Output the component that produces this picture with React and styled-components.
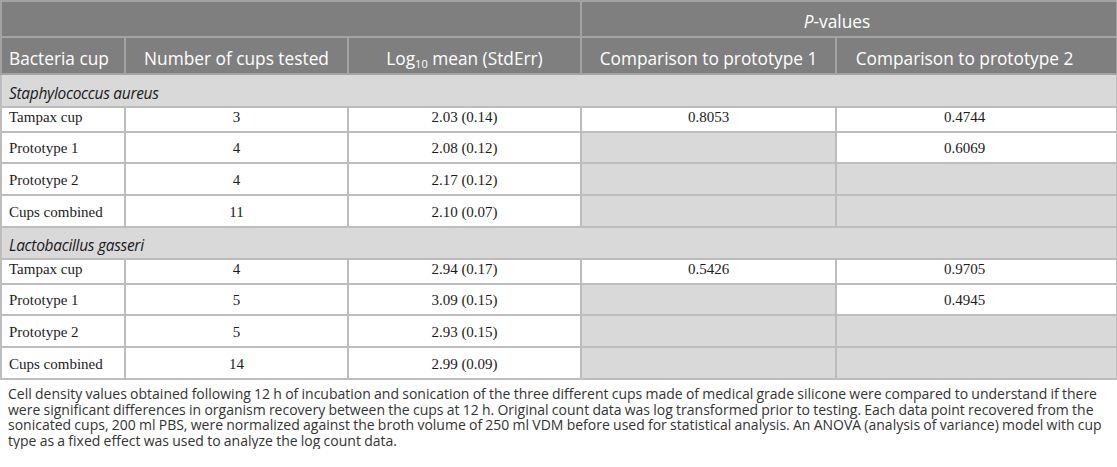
import React from "react";
import styled, { createGlobalStyle } from "styled-components";

const GlobalStyle = createGlobalStyle`
  html, body { margin: 0; padding: 0; background: #ffffff; }
  body { font-family: "Open Sans", "Noto Sans", sans-serif; }
`;

const Page = styled.div`
  width: 1117px;
`;

const Table = styled.table`
  width: 1116px;
  border-collapse: collapse;
  table-layout: fixed;
  border: 2px solid #b8b8b8;
`;

const Row = styled.tr`
  height: ${(p) => p.$h}px;
`;

const HeadCell = styled.th`
  background: #7f7f7f;
  color: #ffffff;
  font-family: "Open Sans", "Noto Sans", sans-serif;
  font-size: 17.3px;
  font-weight: 400;
  line-height: 20px;
  border: 2px solid #a3a3a3;
  vertical-align: bottom;
  text-align: ${(p) => p.$align || "center"};
  padding: 0 ${(p) => (p.$last ? 30 : 7)}px 4px ${(p) => (p.$last ? 6 : 7)}px;
  white-space: nowrap;
`;

const Sub = styled.sub`
  font-size: 11px;
  line-height: 0;
  vertical-align: -3px;
`;

const SectionCell = styled.td`
  background: #d9d9d9;
  font-family: "Open Sans", "Noto Sans", sans-serif;
  font-style: italic;
  font-size: 15.5px;
  letter-spacing: -0.3px;
  line-height: 20px;
  color: #1a1a1a;
  border: 2px solid #bdbdbd;
  vertical-align: bottom;
  padding: 0 7px 3px;
`;

const DataCell = styled.td`
  background: ${(p) => (p.$shade ? "#d9d9d9" : "#ffffff")};
  font-family: "Liberation Serif", "Times New Roman", serif;
  font-size: 15px;
  line-height: 17px;
  color: #1c1c1c;
  border: 2px solid #bdbdbd;
  vertical-align: bottom;
  text-align: ${(p) => p.$align || "center"};
  padding: 0 ${(p) => (p.$last ? 30 : 7)}px 5px ${(p) => (p.$last ? 6 : 7)}px;
  white-space: nowrap;
`;

const Caption = styled.p`
  margin: 6px 0 0;
  padding: 0 0 0 8px;
  font-family: "Open Sans", "Noto Sans", sans-serif;
  font-size: 14px;
  word-spacing: -0.4px;
  line-height: 15.7px;
  color: #333333;
`;

const sections = [
  {
    name: "Staphylococcus aureus",
    rows: [
      { cup: "Tampax cup", n: "3", mean: "2.03 (0.14)", p1: "0.8053", p2: "0.4744", h: 25 },
      { cup: "Prototype 1", n: "4", mean: "2.08 (0.12)", p1: null, p2: "0.6069", h: 31 },
      { cup: "Prototype 2", n: "4", mean: "2.17 (0.12)", p1: null, p2: null, h: 32 },
      { cup: "Cups combined", n: "11", mean: "2.10 (0.07)", p1: null, p2: null, h: 32 },
    ],
  },
  {
    name: "Lactobacillus gasseri",
    rows: [
      { cup: "Tampax cup", n: "4", mean: "2.94 (0.17)", p1: "0.5426", p2: "0.9705", h: 25 },
      { cup: "Prototype 1", n: "5", mean: "3.09 (0.15)", p1: null, p2: "0.4945", h: 31 },
      { cup: "Prototype 2", n: "5", mean: "2.93 (0.15)", p1: null, p2: null, h: 32 },
      { cup: "Cups combined", n: "14", mean: "2.99 (0.09)", p1: null, p2: null, h: 32 },
    ],
  },
];

export default function App() {
  return (
    <Page>
      <GlobalStyle />
      <Table>
        <colgroup>
          <col style={{ width: 124 }} />
          <col style={{ width: 223 }} />
          <col style={{ width: 233 }} />
          <col style={{ width: 255 }} />
          <col style={{ width: 281 }} />
        </colgroup>
        <thead>
          <Row $h={36}>
            <HeadCell colSpan={3} />
            <HeadCell colSpan={2} $last>
              <i>P</i>-values
            </HeadCell>
          </Row>
          <Row $h={37}>
            <HeadCell $align="left">Bacteria cup</HeadCell>
            <HeadCell>Number of cups tested</HeadCell>
            <HeadCell>
              Log<Sub>10</Sub> mean (StdErr)
            </HeadCell>
            <HeadCell>Comparison to prototype 1</HeadCell>
            <HeadCell $last>Comparison to prototype 2</HeadCell>
          </Row>
        </thead>
        <tbody>
          {sections.map((s, i) => (
            <React.Fragment key={s.name}>
              <Row $h={i === 0 ? 33 : 32}>
                <SectionCell colSpan={5}>{s.name}</SectionCell>
              </Row>
              {s.rows.map((r) => (
                <Row key={r.cup} $h={r.h}>
                  <DataCell $align="left">{r.cup}</DataCell>
                  <DataCell>{r.n}</DataCell>
                  <DataCell>{r.mean}</DataCell>
                  <DataCell $shade={r.p1 === null}>{r.p1}</DataCell>
                  <DataCell $shade={r.p2 === null} $last>
                    {r.p2}
                  </DataCell>
                </Row>
              ))}
            </React.Fragment>
          ))}
        </tbody>
      </Table>
      <Caption>
        Cell density values obtained following 12 h of incubation and sonication of the three
        different cups made of medical grade silicone were compared to understand if there were
        significant differences in organism recovery between the cups at 12 h. Original count data
        was log transformed prior to testing. Each data point recovered from the sonicated cups, 200
        ml PBS, were normalized against the broth volume of 250 ml VDM before used for statistical
        analysis. An ANOVA (analysis of variance) model with cup type as a fixed effect was used to
        analyze the log count data.
      </Caption>
    </Page>
  );
}
